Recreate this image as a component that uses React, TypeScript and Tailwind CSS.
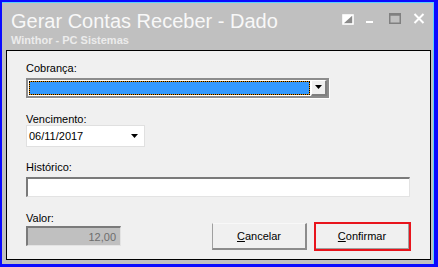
import React from "react";

const F = { fontFamily: '"Liberation Sans", Arial, sans-serif' };

function TitleIcons() {
  return (
    <div className="flex items-start pt-[11px] pr-[9px] gap-0">
      <svg width="12" height="11" viewBox="0 0 12 11" className="mt-[1px]">
        <rect x="1" y="1" width="10" height="9" fill="#8a8a8a" stroke="#ffffff" strokeWidth="1.6" />
        <polygon points="1,1 11,1 1,10" fill="#ffffff" />
      </svg>
      <svg width="8" height="11" viewBox="0 0 8 11" className="ml-[12px]">
        <rect x="0" y="8" width="7" height="2" fill="#ffffff" />
      </svg>
      <svg width="12" height="11" viewBox="0 0 12 11" className="ml-[15px]">
        <rect x="0.75" y="0.75" width="10.5" height="9.5" fill="none" stroke="#808080" strokeWidth="1.5" />
        <rect x="0.75" y="0.75" width="10.5" height="2" fill="#808080" />
      </svg>
      <svg width="12" height="11" viewBox="0 0 12 11" className="ml-[12px]">
        <path d="M1.5 1 L10.5 10 M10.5 1 L1.5 10" stroke="#ffffff" strokeWidth="2" />
      </svg>
    </div>
  );
}

function Label({ children, className = "" }: { children: React.ReactNode; className?: string }) {
  return (
    <div className={"text-[11px] leading-[12px] text-black " + className} style={F}>
      {children}
    </div>
  );
}

export default function App() {
  return (
    <div
      className="w-[438px] h-[267px] bg-[#c0c0c0] border-l-2 border-t-2 border-r-[4px] border-b-[3px] border-l-[#0a0aff] border-t-[#0a0aff] border-r-[#0a0aff] border-b-[#0a0aff] shadow-[inset_0_1px_0_#5ad0ff,inset_-1px_0_0_#5ad0ff] flex flex-col"
      style={F}
    >
      <div className="h-[48px] flex justify-between">
        <div className="pl-[9px] pt-[9px]">
          <div className="text-[20px] leading-[20px] text-[#f8f8f8]" style={F}>
            Gerar Contas Receber - Dado
          </div>
          <div className="text-[11px] leading-[12px] font-bold text-[#ececec] mt-[3px]" style={F}>
            Winthor - PC Sistemas
          </div>
        </div>
        <TitleIcons />
      </div>
      <div className="ml-[4px] w-[425px] h-[210px] border border-black bg-[#f0f0f0] pl-[19px] pr-[20px]">
        <Label className="mt-[11px]">Cobrança:</Label>
        <div className="mt-[4px] w-[303px] h-[20px] border-2 border-[#8c8c8c] shadow-[1px_1px_0_#ffffff] bg-white flex">
          <div className="m-[1px] w-[282px] h-[14px] bg-[#e08a00]">
            <div className="w-full h-full border border-dotted border-black bg-[#3399ff] bg-clip-padding" />
          </div>
          <div className="w-[16px] h-[16px] bg-[#f0f0f0] border-t border-l border-t-white border-l-white border-r-2 border-b-2 border-r-[#808080] border-b-[#808080] flex items-center justify-center">
            <svg width="8" height="5" viewBox="0 0 8 5">
              <polygon points="0,0 7,0 3.5,4" fill="#000" />
            </svg>
          </div>
        </div>
        <Label className="mt-[15px]">Vencimento:</Label>
        <div className="w-[119px] h-[22px] bg-white border border-[#e0e0e0] flex items-center justify-between pl-[2px] pr-[5px]">
          <span className="text-[11px] leading-[12px] text-black" style={F}>
            06/11/2017
          </span>
          <svg width="8" height="5" viewBox="0 0 8 5">
            <polygon points="0,0 7,0 3.5,4" fill="#000" />
          </svg>
        </div>
        <Label className="mt-[14px]">Histórico:</Label>
        <div className="mt-[4px] w-[384px] h-[20px] bg-white border-t-2 border-l-2 border-t-[#7a7a7a] border-l-[#7a7a7a] border-r border-b border-r-[#e3e3e3] border-b-[#e3e3e3]" />
        <div className="mt-[15px] flex justify-between items-start">
          <div>
            <Label>Valor:</Label>
            <div className="mt-[2px] w-[95px] h-[20px] bg-[#c0c0c0] border-t-2 border-l-2 border-t-[#7a7a7a] border-l-[#7a7a7a] border-r border-b border-r-[#e3e3e3] border-b-[#e3e3e3] flex items-center justify-end pr-[4px]">
              <span className="text-[11px] leading-[12px] text-[#6d6d6d]" style={F}>
                12,00
              </span>
            </div>
          </div>
          <div className="flex items-start -mr-[1px]">
            <button className="mt-[11px] w-[95px] h-[27px] bg-[#f0f0f0] border-t border-l border-t-[#f8f8f8] border-l-[#a0a0a0] border-r-2 border-b-2 border-r-[#8c8c8c] border-b-[#8c8c8c] text-[11px] text-black flex items-center justify-center" style={F}>
              <span><span className="underline">C</span>ancelar</span>
            </button>
            <div className="ml-[7px] mt-[10px] w-[97px] h-[29px] border-2 border-[#e8141c] bg-[#f0f0f0]">
              <button className="w-full h-full bg-[#f0f0f0] border-r border-b border-r-[#a0a0a0] border-b-[#a0a0a0] text-[11px] text-black flex items-center justify-center" style={F}>
                <span><span className="underline">C</span>onfirmar</span>
              </button>
            </div>
          </div>
        </div>
      </div>
    </div>
  );
}
